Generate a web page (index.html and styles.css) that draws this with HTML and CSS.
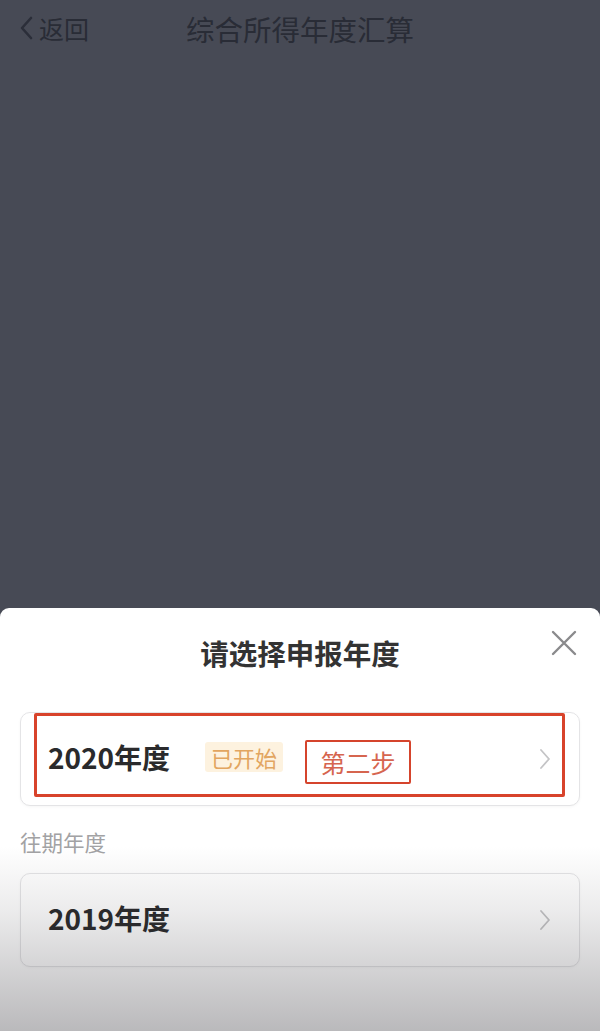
FILE: index.html
```html
<!DOCTYPE html>
<html lang="zh-CN">
<head>
<meta charset="utf-8">
<link rel="stylesheet" href="styles.css">
</head>
<body>
<div class="page">
  <header class="topbar">
    <div class="back">
      <svg class="back-icon" width="14" height="24" viewBox="0 0 14 24"><path d="M12 2 L3 12 L12 22" fill="none" stroke="#2b2e39" stroke-width="2.6" stroke-linecap="round" stroke-linejoin="round"/></svg>
      <span class="back-text">返回</span>
    </div>
    <div class="top-title">综合所得年度汇算</div>
  </header>
  <div class="spacer"></div>
  <section class="sheet">
    <div class="sheet-head">
      <h1 class="sheet-title">请选择申报年度</h1>
      <svg class="close" width="28" height="28" viewBox="0 0 28 28"><path d="M3 3 L25 25 M25 3 L3 25" stroke="#8a8a8c" stroke-width="2.4" stroke-linecap="round"/></svg>
    </div>
    <div class="list">
      <div class="card current">
        <span class="year">2020年度</span>
        <span class="badge">已开始</span>
        <span class="step">第二步</span>
        <svg class="chev" width="12" height="22" viewBox="0 0 12 22"><path d="M2 2 L10 11 L2 20" fill="none" stroke="#c4c4c6" stroke-width="1.8" stroke-linecap="round" stroke-linejoin="round"/></svg>
        <div class="highlight"></div>
      </div>
      <div class="section-label">往期年度</div>
      <div class="card">
        <span class="year">2019年度</span>
        <svg class="chev" width="12" height="22" viewBox="0 0 12 22"><path d="M2 2 L10 11 L2 20" fill="none" stroke="#c4c4c6" stroke-width="1.8" stroke-linecap="round" stroke-linejoin="round"/></svg>
      </div>
    </div>
    <div class="fade"></div>
  </section>
</div>
</body>
</html>
```

FILE: styles.css
```css
* { box-sizing: border-box; }
html, body {
  margin: 0;
  padding: 0;
  height: 100%;
}
body {
  background: #474a55;
  font-family: "Noto Sans CJK SC", "Noto Sans", sans-serif;
  overflow: hidden;
}
.page {
  height: 1031px;
  display: flex;
  flex-direction: column;
}
.topbar {
  height: 56px;
  flex: none;
  display: flex;
  align-items: center;
  position: relative;
  padding-left: 19px;
}
.back {
  display: flex;
  align-items: center;
  gap: 6px;
  color: #292c36;
}
.back-icon { display: block; }
.back-text {
  font-size: 25px;
  line-height: 1;
}
.top-title {
  position: absolute;
  left: 0;
  right: 0;
  top: 0;
  height: 56px;
  display: flex;
  align-items: center;
  justify-content: center;
  font-size: 28.5px;
  color: #292c36;
  pointer-events: none;
}
.spacer { flex: 1; }
.sheet {
  flex: none;
  height: 423px;
  background: #fff;
  border-radius: 9px 9px 0 0;
  position: relative;
  overflow: hidden;
}
.sheet-head {
  height: 90px;
  display: flex;
  align-items: center;
  justify-content: center;
  position: relative;
}
.sheet-title {
  margin: 0;
  font-size: 28.5px;
  font-weight: 700;
  color: #333;
  line-height: 1;
}
.close {
  position: absolute;
  right: 22px;
  top: 21px;
}
.list {
  padding: 14px 20px 0;
  display: flex;
  flex-direction: column;
}
.card {
  height: 94px;
  border: 1px solid #e4e4e6;
  border-radius: 10px;
  background: #fff;
  display: flex;
  align-items: center;
  padding: 0 28px 0 27px;
  position: relative;
  box-shadow: 0 1px 3px rgba(0,0,0,0.04);
}
.year {
  font-size: 28px;
  font-weight: 700;
  color: #2a2a2c;
  line-height: 1;
  margin-top: -4px;
}
.badge {
  margin-left: 35px;
  background: #fdf2df;
  color: #e2a560;
  font-size: 22px;
  line-height: 30px;
  padding: 0 6px;
  border-radius: 3px;
  margin-top: -4px;
}
.step {
  margin-left: 22px;
  width: 106px;
  height: 44px;
  border: 2.5px solid #d5442c;
  border-radius: 2px;
  color: #d6654f;
  font-size: 25px;
  display: flex;
  align-items: center;
  justify-content: center;
  margin-top: 6px;
}
.chev {
  margin-left: auto;
}
.highlight {
  position: absolute;
  left: 13px;
  right: 14px;
  top: 0;
  bottom: 8px;
  border: 3px solid #d8432b;
  border-radius: 2px;
  pointer-events: none;
}
.section-label {
  font-size: 21.5px;
  color: #a2a2a4;
  line-height: 1;
  padding: 25px 0 20px 0;
}
.fade {
  position: absolute;
  left: 0;
  right: 0;
  bottom: 0;
  height: 185px;
  background: linear-gradient(to bottom, rgba(40,38,45,0) 0%, rgba(40,38,45,0.09) 35%, rgba(40,38,45,0.32) 100%);
  pointer-events: none;
}
```
